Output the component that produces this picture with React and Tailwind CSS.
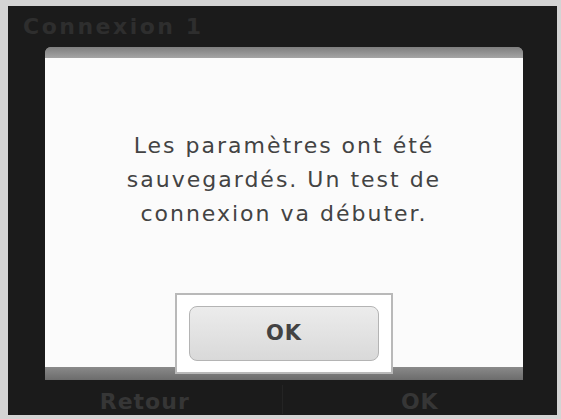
export default function App() {
  const font = { fontFamily: '"DejaVu Sans", "Open Sans", sans-serif' }
  return (
    <div
      className="w-[561px] h-[419px] bg-[#d4d4d4] pt-[6px] pl-[8px] pr-[4px] pb-[4px]"
      style={font}
    >
      <div className="h-full bg-[#1b1b1b] flex flex-col">
        <div className="h-[41px] shrink-0 pl-[15px] flex items-center text-[22px] font-bold text-[#2e2e2e] tracking-[2.5px]">
          Connexion 1
        </div>

        <div className="ml-[37px] mr-[34px] h-[333px] shrink-0 flex flex-col rounded-t-[6px] bg-[#8e8e8e]">
          <div className="h-[11px] rounded-t-[6px] bg-gradient-to-b from-[#7f7f7f] to-[#a5a5a5]" />
          <div className="flex-1 bg-[#fbfbfb] flex flex-col items-center pt-[71px] text-[#434343]">
            <div className="text-center text-[22px] leading-[34px] tracking-[2px]">
              <div>Les paramètres ont été</div>
              <div>sauvegardés. Un test de</div>
              <div>connexion va débuter.</div>
            </div>
            <div className="mt-auto mb-[-7px] relative z-10 w-[218px] h-[81px] border-2 border-[#b9b9b9] bg-white px-[12px] py-[11px]">
              <div className="h-full rounded-[8px] border border-[#b4b4b4] bg-gradient-to-b from-[#ececec] to-[#d9d9d9] flex items-center justify-center text-[21px] font-bold tracking-[1px] text-[#434343]">
                OK
              </div>
            </div>
          </div>
          <div className="h-[13px] bg-gradient-to-b from-[#8a8a8a] to-[#6c6c6c]" />
        </div>

        <div className="h-[35px] shrink-0 grid grid-cols-2 py-[5px] text-[22px] leading-[25px] font-bold tracking-[1px] text-[#363636]">
          <div className="flex items-center justify-center border-r border-[#242424] pt-[4px]">Retour</div>
          <div className="flex items-center justify-center pt-[4px]">OK</div>
        </div>
      </div>
    </div>
  )
}
